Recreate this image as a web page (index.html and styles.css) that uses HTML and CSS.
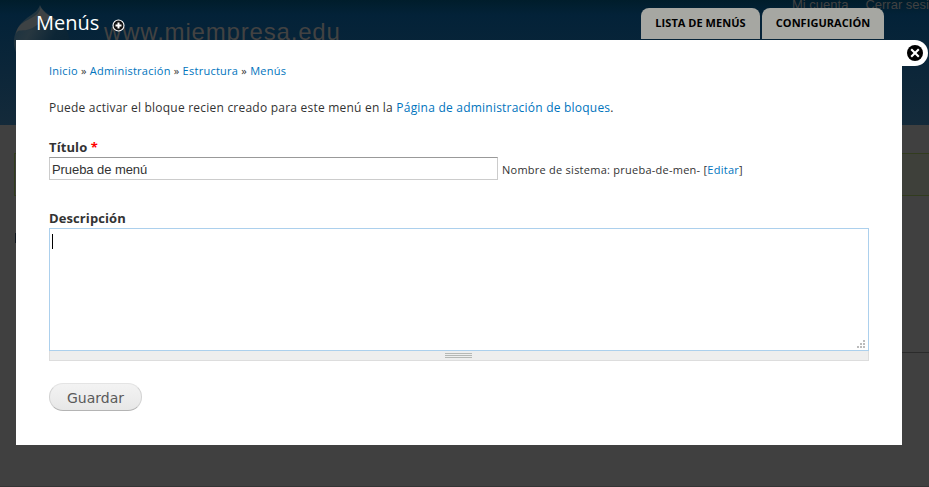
FILE: index.html
```html
<!DOCTYPE html>
<html lang="es">
<head>
<meta charset="utf-8">
<title>Menús</title>
<link rel="stylesheet" href="styles.css">
</head>
<body>
<div class="site">
  <div class="site-header">
    <svg class="site-logo" width="60" height="66" viewBox="0 0 60 66">
      <defs><linearGradient id="drop" x1="0" y1="0" x2="1" y2="0.6"><stop offset="0" stop-color="#152f3f"/><stop offset=".4" stop-color="#273740"/><stop offset=".75" stop-color="#0d2636"/><stop offset="1" stop-color="#0b2434"/></linearGradient></defs>
      <path d="M27 0C29 6 35 9 44 15C53 21 58 30 56 42C53 57 42 64 29 64C15 64 3 54 1 40C0 28 6 19 14 13C21 8 25 6 27 0Z" fill="url(#drop)"/>
      <path d="M3 29C5 17 15 16 23 10C26 8 28 4 27 1C31 9 37 10 43 15C30 14 24 21 17 24C10 27 5 23 3 29Z" fill="#3d4244"/>
    </svg>
    <div class="site-name">www.miempresa.edu</div>
    <div class="site-links"><span>Mi cuenta</span><span>Cerrar sesi</span></div>
  </div>
  <div class="site-message"></div>
  <div class="site-mark"></div>
  <div class="site-rule"></div>
  <div class="site-end"></div>
</div>
<div class="overlay">
  <header class="overlay-head">
    <h1>Menús</h1>
    <svg class="add" width="13" height="13" viewBox="0 0 13 13"><circle cx="6.5" cy="6.5" r="5.5" fill="#111" stroke="#fff" stroke-width="1.1"/><path d="M6.5 3.5V9.5M3.5 6.5H9.5" stroke="#fff" stroke-width="2"/></svg>
    <nav class="tabs"><a class="tab tab-list"><span>LISTA DE MENÚS</span></a><a class="tab tab-config"><span>CONFIGURACIÓN</span></a></nav>
  </header>
  <main class="panel">
    <a class="close"><svg width="16" height="16" viewBox="0 0 16 16"><circle cx="8" cy="8" r="8" fill="#000"/><path d="M4.2 4.2L11.8 11.8M11.8 4.2L4.2 11.8" stroke="#fff" stroke-width="2.1"/></svg></a>
    <nav class="breadcrumb"><a>Inicio</a> » <a>Administración</a> » <a>Estructura</a> » <a>Menús</a></nav>
    <p class="help">Puede activar el bloque recien creado para este menú en la <a>Página de administración de bloques</a>.</p>
    <div class="label label-title">Título <span class="required">*</span></div>
    <div class="title-row"><div class="input">Prueba de menú</div><div class="machine">Nombre de sistema: prueba-de-men- [<a>Editar</a>]</div></div>
    <div class="label label-desc">Descripción</div>
    <div class="textarea"><i class="caret"></i>
      <svg class="corner" width="9" height="9" viewBox="0 0 9 9" fill="#bbb"><path d="M6 0h2v2h-2zM3 3h2v2h-2zM6 3h2v2h-2zM0 6h2v2h-2zM3 6h2v2h-2zM6 6h2v2h-2z"/></svg>
    </div>
    <div class="grippie"><i></i><i></i><i></i></div>
    <div class="button"><span>Guardar</span></div>
  </main>
</div>
</body>
</html>
```
FILE: styles.css
```css
* { box-sizing: border-box; }
body {
  margin: 0;
  width: 929px;
  height: 487px;
  overflow: hidden;
  position: relative;
  background: #404040;
  color: #333;
  font: 12px/16px "Open Sans", "Noto Sans", sans-serif;
}
a { color: #0074bd; }
.site { position: absolute; inset: 0; overflow: hidden; }
.site-header { height: 125px; background: linear-gradient(#001d2b, #032238 12%, #142a3a); position: relative; }
.site-logo { position: absolute; left: 13px; top: 5px; }
.site-name { position: absolute; left: 104px; top: 18px; font: 24px/28px "Liberation Sans", sans-serif; color: #424242; white-space: nowrap; letter-spacing: .82px; }
.site-links { position: absolute; left: 792px; top: -3px; display: flex; gap: 17px; font: 13px/16px "Liberation Sans", sans-serif; color: #424242; white-space: nowrap; }
.site-message { position: absolute; left: 14px; right: -5px; top: 153px; height: 43px; border: 1px solid #323c1f; background: #3e403a; }
.site-mark { position: absolute; left: 15px; top: 233px; width: 3px; height: 10px; background: #0f161e; }
.site-rule { position: absolute; left: 16px; right: 0; top: 352px; height: 1px; background: #2b2b2b; }
.site-end { position: absolute; left: 0; right: 0; bottom: 0; height: 1px; background: #343434; }
.overlay { position: relative; width: 886px; margin-left: 16px; }
.overlay-head { height: 40px; display: flex; align-items: flex-start; padding: 0 18px 0 20px; }
h1 { margin: 9px 0 0; width: 76px; font-size: 20px; line-height: 28px; font-weight: 400; color: #fff; letter-spacing: 0; }
.add { margin-top: 19px; }
.tabs { margin: 8px 0 0 auto; display: flex; gap: 2px; }
.tab { height: 31px; border-radius: 8px 8px 0 0; background: #a6a7a2; color: #000; font-size: 11px; line-height: 30px; font-weight: 700; text-align: center; white-space: nowrap; }
.tab-list { width: 119px; letter-spacing: .04px; }
.tab-config { width: 122px; letter-spacing: .04px; }
.panel { position: relative; height: 405px; background: #fff; padding: 23px 33px 0; }
.close { position: absolute; left: 886px; top: 0; width: 26px; height: 26px; padding: 5px; border-radius: 0 13px 13px 0; background: #fff; }
.close svg { display: block; }
.breadcrumb { height: 16px; font-size: 11px; white-space: nowrap; letter-spacing: .255px; }
.help { margin: 21px 0 0; height: 16px; white-space: nowrap; letter-spacing: .22px; }
.label { height: 16px; font-size: 13px; font-weight: 700; white-space: nowrap; letter-spacing: .1px; }
.label-title { margin-top: 23px; }
.required { color: #f00; }
.title-row { display: flex; margin-top: 2px; height: 23px; }
.input { width: 449px; height: 23px; border: 1px solid #ccc; border-top-color: #999; padding-left: 2px; font: 13px/23px "Liberation Sans", sans-serif; letter-spacing: -.07px; }
.machine { margin: 4px 0 0 4px; font-size: 11px; line-height: 17px; white-space: nowrap; letter-spacing: .25px; }
.label-desc { margin-top: 30px; }
.textarea { position: relative; margin-top: 2px; height: 123px; border: 1px solid #acd0ed; padding: 5px 2px; }
.caret { display: block; width: 1px; height: 15px; background: #000; }
.corner { position: absolute; right: 2px; bottom: 1px; }
.grippie { height: 10px; border: 1px solid #ddd; border-top: 0; background: #eee; display: flex; flex-direction: column; align-items: center; gap: 1px; padding: 2px 1px 0 0; }
.grippie i { width: 27px; height: 1px; background: #b5b8b5; }
.button { margin-top: 22px; width: 93px; height: 28px; border: 1px solid #e4e4e4; border-bottom-color: #b4b4b4; border-left-color: #d2d2d2; border-right-color: #d2d2d2; border-radius: 14px; background: linear-gradient(#f3f3f3, #e7e7e7); color: #5a5a5a; font: 14px/28px "DejaVu Sans", sans-serif; text-align: center; }
```
